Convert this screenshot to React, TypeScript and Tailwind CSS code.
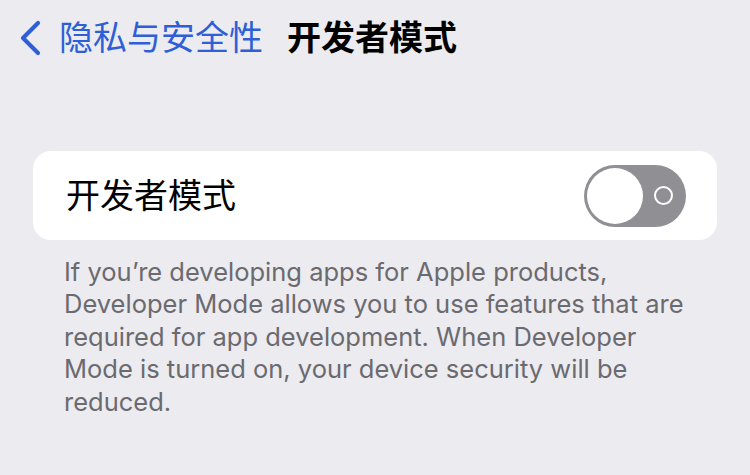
const CJK = "font-['Inter','Noto_Sans_CJK_SC',sans-serif]";

const NOTE = [
  "If you’re developing apps for Apple products,",
  "Developer Mode allows you to use features that are",
  "required for app development. When Developer",
  "Mode is turned on, your device security will be",
  "reduced.",
];

function Toggle() {
  return (
    <div className="flex h-[62px] w-[102px] items-center rounded-full bg-[#8f8f94] p-[3px]">
      <div className="h-[56px] w-[56px] rounded-full bg-white" />
      <div className="flex flex-1 items-center justify-center">
        <div className="h-[19px] w-[19px] rounded-full border-2 border-white" />
      </div>
    </div>
  );
}

export default function App() {
  return (
    <div className={`flex h-[475px] w-[750px] flex-col bg-[#ecebf0] ${CJK}`}>
      <header className="flex h-[76px] items-center pl-[18px]">
        <svg width="26" height="36" viewBox="0 0 26 36" className="mr-[15px]" aria-hidden>
          <path
            d="M20 3 L5 18 L20 33"
            fill="none"
            stroke="#2e5fd6"
            strokeWidth="4.2"
            strokeLinecap="round"
            strokeLinejoin="round"
          />
        </svg>
        <span className="text-[34px] leading-none text-[#2e5fd6]">隐私与安全性</span>
        <span className="ml-[24px] text-[34px] font-bold leading-none text-black">开发者模式</span>
      </header>

      <div className="mx-[33px] mt-[75px] flex h-[89px] items-center justify-between rounded-[18px] bg-white pl-[33px] pr-[31px]">
        <span className="text-[34px] leading-none text-black">开发者模式</span>
        <Toggle />
      </div>

      <div className="mt-[16px] pl-[64px] text-[25.5px] leading-[32.4px] text-[#6a6a6f]">
        {NOTE.map((line) => (
          <div key={line}>{line}</div>
        ))}
      </div>
    </div>
  );
}
